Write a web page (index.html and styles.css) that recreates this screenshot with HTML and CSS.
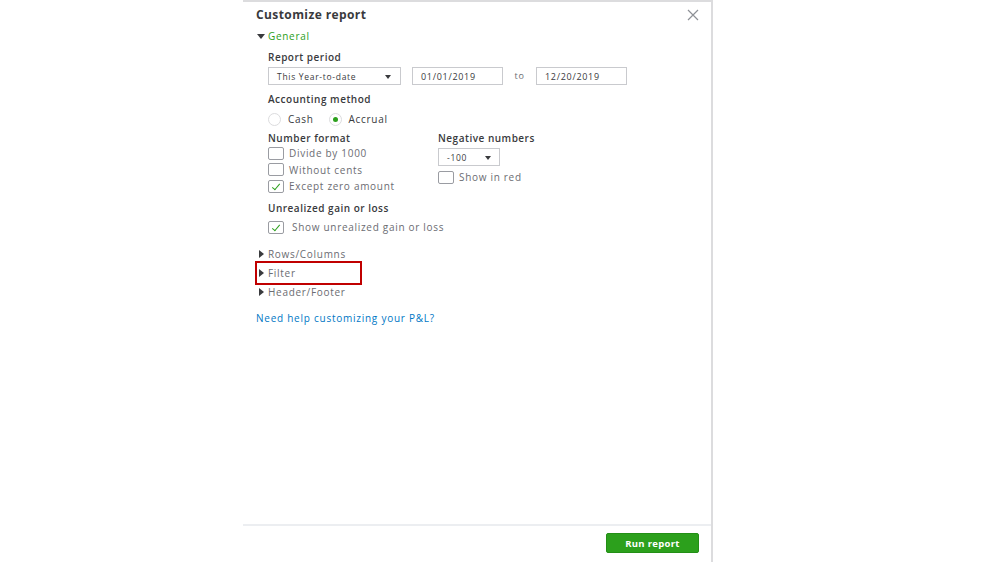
FILE: index.html
```html
<!DOCTYPE html>
<html>
<head lang="en">
	<meta charset="UTF-8">
	<title>Customize report</title>
	<link rel="stylesheet" href="styles.css">
</head>
<body>
<div class="panel">
	<div class="panel_body">
		<div class="head">
			<h1>Customize report</h1>
			<svg class="close" width="12" height="12" viewBox="0 0 12 12"><path d="M1 1L11 11M11 1L1 11" stroke="#8d9096" stroke-width="1.2" fill="none"/></svg>
		</div>
		<div class="section_title open"><span class="tri down"></span>General</div>
		<div class="general">
			<h2>Report period</h2>
			<div class="period">
				<div class="select wide">This Year-to-date<span class="caret"></span></div>
				<div class="input">01/01/2019</div>
				<span class="to">to</span>
				<div class="input">12/20/2019</div>
			</div>
			<h2>Accounting method</h2>
			<div class="radios">
				<label><span class="radio"></span>Cash</label>
				<label><span class="radio on"></span>Accrual</label>
			</div>
			<div class="cols">
				<div class="col">
					<h2>Number format</h2>
					<label class="check"><span class="box"></span>Divide by 1000</label>
					<label class="check"><span class="box"></span>Without cents</label>
					<label class="check"><span class="box on"></span>Except zero amount</label>
				</div>
				<div class="col right">
					<h2>Negative numbers</h2>
					<div class="select small">-100<span class="caret"></span></div>
					<label class="check"><span class="box"></span>Show in red</label>
				</div>
			</div>
			<h2 class="unreal">Unrealized gain or loss</h2>
			<label class="check wide_gap"><span class="box on"></span>Show unrealized gain or loss</label>
		</div>
		<ul class="sections">
			<li><span class="tri"></span>Rows/Columns</li>
			<li class="marked"><span class="tri"></span>Filter</li>
			<li><span class="tri"></span>Header/Footer</li>
		</ul>
		<a class="help" href="#">Need help customizing your P&amp;L?</a>
	</div>
	<div class="foot">
		<button class="run">Run report</button>
	</div>
</div>
</body>
</html>
```
FILE: styles.css
```css
*{
	margin:0;
	padding:0;
	box-sizing:border-box;
	font-family:"Open Sans","Noto Sans",sans-serif;
}
body{
	background:#fff;
	color:#393a3d;
	font-size:10px;
	letter-spacing:0.7px;
}
.panel{
	width:470px;
	height:562px;
	margin-left:243px;
	border-top:2px solid #dcdcde;
	border-right:2px solid #dcdcde;
	display:flex;
	flex-direction:column;
}
.panel_body{
	flex:1;
	padding:4px 0 0 13px;
}
.head{
	display:flex;
	justify-content:space-between;
	align-items:center;
	padding-right:12px;
	height:16px;
}
h1{
	font-size:12px;
	font-weight:700;
	letter-spacing:0.4px;
	color:#393a3d;
}
.close{
	margin-top:1px;
}
.section_title{
	margin-top:8px;
	display:flex;
	align-items:center;
	color:#2ca01c;
	font-size:10px;
	line-height:13px;
}
.tri{
	display:inline-block;
	width:0;
	height:0;
	border-left:5px solid #393a3d;
	border-top:4px solid transparent;
	border-bottom:4px solid transparent;
	margin-right:4px;
}
.tri.down{
	border-top:5px solid #393a3d;
	border-left:4px solid transparent;
	border-right:4px solid transparent;
	border-bottom:0;
	margin-left:1px;
	margin-right:3px;
}
.general{
	padding-left:12px;
}
h2{
	font-size:10px;
	line-height:13px;
	font-weight:600;
	letter-spacing:0.5px;
	color:#393a3d;
	margin-top:8px;
	margin-bottom:3px;
}
.period{
	display:flex;
	align-items:center;
	margin-bottom:2px;
}
.select, .input{
	height:18px;
	border:1px solid #c9cace;
	display:flex;
	align-items:center;
	padding-left:8px;
	font-size:8.5px;
	color:#393a3d;
	position:relative;
}
.input{
	width:91px;
	font-size:9px;
}
.select.wide{
	width:133px;
	margin-right:11px;
}
.to{
	width:33px;
	text-align:center;
	font-size:9px;
	color:#6b6c72;
	margin-top:-2px;
}
.caret{
	position:absolute;
	right:9px;
	top:7px;
	border-top:4px solid #393a3d;
	border-left:3.5px solid transparent;
	border-right:3.5px solid transparent;
}
.radios{
	display:flex;
	gap:15px;
	margin-top:6px;
}
.radios label, .check{
	display:flex;
	align-items:center;
	font-size:10px;
	color:#393a3d;
}
.radio{
	width:13px;
	height:13px;
	border:1px solid #dcdcde;
	border-radius:50%;
	margin-right:7px;
	position:relative;
}
.radio.on::after{
	content:"";
	position:absolute;
	left:3px;
	top:3px;
	width:5px;
	height:5px;
	border-radius:50%;
	background:#2ca01c;
}
.cols{
	display:flex;
}
.col{
	width:170px;
}
.col h2{
	margin-top:6px;
	margin-bottom:0;
}
.col.right h2{
	margin-bottom:3px;
}
.check{
	height:16.6px;
	color:#6b6c72;
}
.box{
	width:16px;
	height:13px;
	border:1px solid #9a9ca2;
	border-radius:2px;
	margin-right:5px;
	position:relative;
}
.box.on::after{
	content:"";
	position:absolute;
	left:5px;
	top:1px;
	width:3px;
	height:7px;
	border-right:1.5px solid #2ca01c;
	border-bottom:1.5px solid #2ca01c;
	transform:rotate(40deg);
}
.select.small{
	width:62px;
	margin-bottom:3px;
}
.select.small .caret{
	right:8px;
}
.wide_gap .box{
	margin-right:8px;
}
h2.unreal{
	margin-top:7px;
	margin-bottom:4px;
}
.sections{
	list-style:none;
	margin-top:9px;
}
.sections li{
	display:flex;
	align-items:center;
	height:19px;
	font-size:10px;
	color:#6b6c72;
	position:relative;
	padding-left:3px;
}
.sections li .tri{
	margin-right:4px;
}
.marked::after{
	content:"";
	position:absolute;
	left:-1px;
	top:-2px;
	width:107px;
	height:24px;
	box-sizing:border-box;
	border:2px solid #c00000;
}
.help{
	display:block;
	margin-top:11px;
	color:#0077c5;
	text-decoration:none;
	font-size:10px;
	line-height:13px;
	letter-spacing:0.75px;
}
.foot{
	border-top:2px solid #eceef1;
	height:38px;
	display:flex;
	justify-content:flex-end;
	align-items:center;
	padding-right:12px;
}
.run{
	background:#2ca01c;
	color:#fff;
	border:1px solid #238f16;
	border-radius:2px;
	width:93px;
	height:20px;
	font-size:9.5px;
	font-weight:700;
	letter-spacing:0.3px;
	margin-top:-2px;
}
```
